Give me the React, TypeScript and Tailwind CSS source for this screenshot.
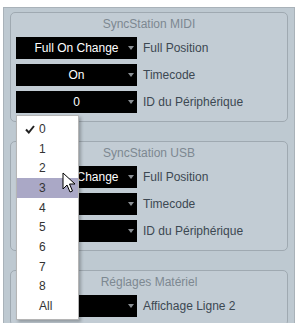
import React from 'react';

const font = { fontFamily: '"Liberation Sans", Arial, sans-serif' };

function Select({ value }: { value: string }) {
  return (
    <div className="relative flex h-[22px] w-[121px] shrink-0 items-center justify-center bg-black text-[12px] text-white">
      <span>{value}</span>
      <svg className="absolute right-[3px] top-[9px]" width="6" height="4" viewBox="0 0 6 4">
        <path d="M0 0 L6 0 L3 4 Z" fill="#8a8f94" />
      </svg>
    </div>
  );
}

function Row({ value, label }: { value: string; label: string }) {
  return (
    <div className="flex items-center gap-[6px]">
      <Select value={value} />
      <span className="text-[12px] text-[#3c4852]">{label}</span>
    </div>
  );
}

function Group({ title, rows }: { title: string; rows: { value: string; label: string }[] }) {
  return (
    <div className="rounded-[5px] border border-[#9fa9b1] bg-[#c2ccd4] px-[5px] pb-[8px] pt-[4px]">
      <div className="mb-[6px] text-center text-[12px] leading-[14px] text-[#7d8891]">{title}</div>
      <div className="flex flex-col gap-[5px]">
        {rows.map((r, i) => (
          <Row key={i} value={r.value} label={r.label} />
        ))}
      </div>
    </div>
  );
}

const items = ['0', '1', '2', '3', '4', '5', '6', '7', '8', 'All'];

export default function App() {
  return (
    <div className="relative h-[323px] w-[298px] overflow-hidden bg-white" style={font}>
      <div className="mx-[3px] mt-[7px] h-[330px] border border-[#a9b2b9] bg-[#bec9d1] px-[6px] pt-[4px]">
        <div className="flex flex-col gap-[19px]">
          <Group
            title="SyncStation MIDI"
            rows={[
              { value: 'Full On Change', label: 'Full Position' },
              { value: 'On', label: 'Timecode' },
              { value: '0', label: 'ID du Périphérique' },
            ]}
          />
          {/* values hidden under the open menu are left blank */}
          <Group
            title="SyncStation USB"
            rows={[
              { value: 'Full On Change', label: 'Full Position' },
              { value: '', label: 'Timecode' },
              { value: '', label: 'ID du Périphérique' },
            ]}
          />
          <Group
            title="Réglages Matériel"
            rows={[{ value: '', label: 'Affichage Ligne 2' }]}
          />
        </div>
      </div>

      {/* open dropdown menu */}
      <div className="absolute left-[16px] top-[115px] z-10 w-[63px] border border-[#b5b5b5] bg-white pb-[3px] pt-[3px] shadow-[2px_2px_3px_rgba(0,0,0,0.25)]">
        {items.map((it) => (
          <div
            key={it}
            className={`relative flex h-[19.7px] items-center pl-[22px] text-[12px] text-[#333] ${it === '3' ? 'bg-[#aaa8c6]' : ''}`}
          >
            {it === '0' && (
              <svg className="absolute left-[8px] top-[6px]" width="10" height="9" viewBox="0 0 10 9">
                <path d="M1 4.5 L3.8 7.5 L9 1" stroke="#222" strokeWidth="2" fill="none" />
              </svg>
            )}
            {it}
          </div>
        ))}
      </div>

      {/* mouse cursor */}
      <svg className="absolute left-[62px] top-[172px] z-20" width="14" height="22" viewBox="0 0 14 22">
        <path d="M1 1 L1 17 L5 13 L8 20 L10.5 19 L7.5 12 L13 12 Z" fill="white" stroke="black" strokeWidth="1" strokeLinejoin="round" />
      </svg>
    </div>
  );
}
